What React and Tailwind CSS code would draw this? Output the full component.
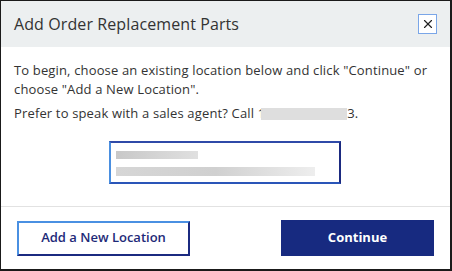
import { X } from "lucide-react";

export default function App() {
  return (
    <div className="flex h-[271px] w-[452px] flex-col border-b-2 border-l border-r-2 border-t border-[#1a1a1a] bg-white font-['Open_Sans',sans-serif] text-[#333]">
      <header className="flex h-[46px] shrink-0 items-center justify-between bg-[#eceff0] pl-[13px] pr-[13px]">
        <h1 className="text-[16px] leading-none tracking-[0.1px] text-[#333]">Add Order Replacement Parts</h1>
        <button className="flex h-[20px] w-[19px] items-center justify-center border border-[#7aa6e8] bg-white">
          <X size={14} strokeWidth={2} className="text-[#222]" />
        </button>
      </header>

      <section className="flex-1 px-[13px] pt-[14px]">
        <p className="text-[13px] leading-[19px] tracking-[0.15px]">
          To begin, choose an existing location below and click "Continue" or choose "Add a New Location".
        </p>
        <p className="mt-[5px] flex items-center text-[13px] leading-[19px] tracking-[0.15px]">
          Prefer to speak with a sales agent? Call 1
          <span className="ml-[-4px] inline-block h-[12px] w-[86px] bg-[#dedede]" />
          3.
        </p>

        <div className="ml-[95px] mt-[18px] h-[43px] w-[232px] border-2 border-l-[#4a8fe0] border-t-[#2f4aa8] border-r-[#1b2a80] border-b-[#2a55b8] px-[5px] pt-[8px]">
          <div className="h-[8px] w-[82px] bg-gradient-to-r from-[#c8c8c8] via-[#d4d4d4] to-[#e0e0e0]" />
          <div className="mt-[8px] h-[9px] w-[199px] bg-gradient-to-r from-[#d6d6d6] via-[#d0d0d0] to-[#eeeeee]" />
        </div>
      </section>

      <footer className="flex h-[63px] shrink-0 items-center justify-between border-t border-[#e2e2e2] pl-[16px] pr-[16px]">
        <button className="h-[35px] w-[173px] border-2 border-l-[#4a90e2] border-t-[#4a90e2] border-r-[#1b2a80] border-b-[#1b2a80] bg-white text-[13px] font-semibold text-[#1e2a78]">
          Add a New Location
        </button>
        <button className="h-[36px] w-[153px] bg-[#172a80] text-[13px] font-bold text-white">
          Continue
        </button>
      </footer>
    </div>
  );
}
